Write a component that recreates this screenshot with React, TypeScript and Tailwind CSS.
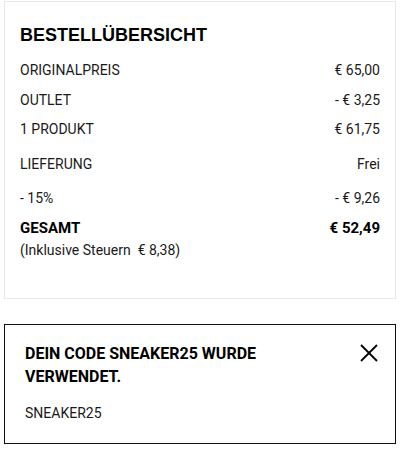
const rows = [
  { label: "ORIGINALPREIS", value: "€ 65,00", mt: "mt-[13px]" },
  { label: "OUTLET", value: "- € 3,25", mt: "mt-[10px]" },
  { label: "1 PRODUKT", value: "€ 61,75", mt: "mt-[9px]" },
  { label: "LIEFERUNG", value: "Frei", mt: "mt-[15px]" },
  { label: "- 15%", value: "- € 9,26", mt: "mt-[14px]" },
];

export default function App() {
  return (
    <div className="min-h-[463px] bg-white pt-px pl-[4px] text-[#1a1a1a]" style={{ fontFamily: "Roboto, 'Liberation Sans', sans-serif" }}>
      <section className="w-[392px] border border-[#e8e8e8] px-[15px] pt-[21px] pb-[38px]">
        <h2 className="text-[18px] font-bold leading-[24px] text-black" style={{ fontFamily: "'Liberation Sans', Arial, sans-serif" }}>
          BESTELLÜBERSICHT
        </h2>
        {rows.map((row) => (
          <div key={row.label} className={`${row.mt} flex h-5 items-center justify-between text-[14px] leading-5`}>
            <span>{row.label}</span>
            <span>{row.value}</span>
          </div>
        ))}
        <div className="mt-[10px] flex h-5 items-center justify-between text-[15px] font-bold leading-5 text-black">
          <span>GESAMT</span>
          <span>€ 52,49</span>
        </div>
        <p className="mt-[2px] whitespace-pre text-[14px] leading-5">(Inklusive Steuern  € 8,38)</p>
      </section>

      <section className="mt-[25px] flex w-[392px] items-start justify-between border border-[#111] pt-[17px] pr-[17px] pb-[20px] pl-[20px]">
        <div>
          <p className="max-w-[300px] text-[16px] font-bold leading-[23px] text-black">DEIN CODE SNEAKER25 WURDE VERWENDET.</p>
          <p className="mt-[15px] text-[14px] leading-5">SNEAKER25</p>
        </div>
        <button type="button" className="mt-[2px] text-black">
          <svg width="18" height="18" viewBox="0 0 18 18" fill="none" stroke="currentColor" strokeWidth="1.8">
            <path d="M1 1L17 17M17 1L1 17" />
          </svg>
        </button>
      </section>
    </div>
  );
}
